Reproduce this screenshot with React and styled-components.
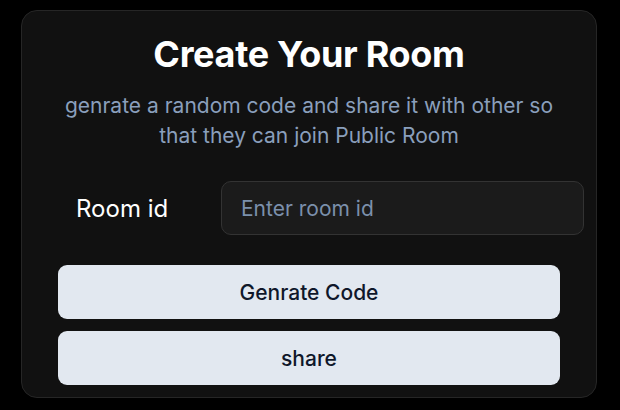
import React from "react";
import styled, { createGlobalStyle } from "styled-components";

const Global = createGlobalStyle`
  html, body { margin: 0; padding: 0; background: #000; }
  body { font-family: Inter, "Noto Sans", sans-serif; }
  * { box-sizing: border-box; }
`;

const Page = styled.div`
  width: 620px;
  height: 410px;
  padding: 10px 23px 0 21px;
`;

const Card = styled.div`
  width: 576px;
  height: 388px;
  background: #111111;
  border: 1px solid #262626;
  border-radius: 16px;
  padding: 23px 13px 12px 36px;
  display: flex;
  flex-direction: column;
  align-items: flex-start;
`;

const Title = styled.h1`
  margin: 0;
  width: 502px;
  text-align: center;
  color: #fff;
  font-size: 36px;
  line-height: 40px;
  font-weight: 700;
  letter-spacing: -0.3px;
`;

const Subtitle = styled.p`
  margin: 17px 0 0;
  width: 502px;
  text-align: center;
  color: #8a9fbc;
  font-size: 21px;
  line-height: 30px;
`;

const Row = styled.div`
  margin-top: 30px;
  display: flex;
  align-items: center;
  padding-left: 18px;
`;

const Label = styled.label`
  width: 145px;
  color: #fff;
  font-size: 24px;
`;

const Input = styled.input`
  width: 363px;
  height: 54px;
  background: #1b1b1b;
  border: 1px solid #333;
  border-radius: 10px;
  padding: 0 19px;
  color: #fff;
  font-family: inherit;
  font-size: 21px;
  outline: none;
  &::placeholder { color: #7b90ac; }
`;

const Buttons = styled.div`
  margin-top: 30px;
  display: flex;
  flex-direction: column;
  gap: 12px;
`;

const Button = styled.button`
  width: 502px;
  height: 54px;
  border: none;
  border-radius: 9px;
  background: #e2e8f0;
  color: #0f172a;
  font-family: inherit;
  font-size: 21px;
  font-weight: 500;
  cursor: pointer;
`;

export default function App() {
  return (
    <>
      <Global />
      <Page>
        <Card>
          <Title>Create Your Room</Title>
          <Subtitle>
            genrate a random code and share it with other so that they can join Public Room
          </Subtitle>
          <Row>
            <Label>Room id</Label>
            <Input placeholder="Enter room id" />
          </Row>
          <Buttons>
            <Button>Genrate Code</Button>
            <Button>share</Button>
          </Buttons>
        </Card>
      </Page>
    </>
  );
}
